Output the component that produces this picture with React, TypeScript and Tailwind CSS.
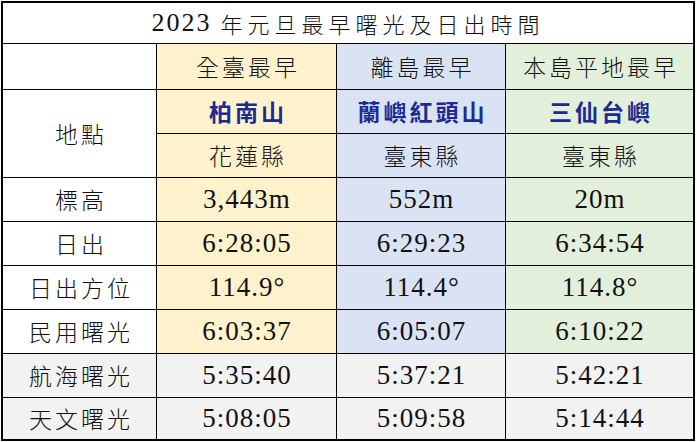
import React from 'react';

const cjk = '"Noto Sans CJK TC", "Noto Sans CJK SC", sans-serif';
const num = '"Liberation Serif", "Noto Sans CJK TC", serif';

const colBg = ['bg-[#fff2cc]', 'bg-[#dae3f3]', 'bg-[#e2efda]'];

const headers = ['全臺最早', '離島最早', '本島平地最早'];
const places = ['柏南山', '蘭嶼紅頭山', '三仙台嶼'];
const counties = ['花蓮縣', '臺東縣', '臺東縣'];

const rows: { label: string; values: string[]; gray?: boolean }[] = [
  { label: '標高', values: ['3,443m', '552m', '20m'] },
  { label: '日出', values: ['6:28:05', '6:29:23', '6:34:54'] },
  { label: '日出方位', values: ['114.9°', '114.4°', '114.8°'] },
  { label: '民用曙光', values: ['6:03:37', '6:05:07', '6:10:22'] },
  { label: '航海曙光', values: ['5:35:40', '5:37:21', '5:42:21'], gray: true },
  { label: '天文曙光', values: ['5:08:05', '5:09:58', '5:14:44'], gray: true },
];

const Cjk: React.FC<{ children: React.ReactNode; className?: string }> = ({ children, className = '' }) => (
  <span className={`text-[23px] tracking-[3px] pl-[3px] leading-none ${className}`} style={{ fontFamily: cjk }}>
    {children}
  </span>
);

const Num: React.FC<{ children: React.ReactNode }> = ({ children }) => (
  <span className="text-[27px] tracking-[1px] pl-[1px] leading-none text-[#111]" style={{ fontFamily: num }}>
    {children}
  </span>
);

const Cell: React.FC<{ className?: string; children?: React.ReactNode }> = ({ className = '', children }) => (
  <div className={`flex items-center justify-center ${className}`}>{children}</div>
);

export default function App() {
  return (
    <div className="w-[697px] h-[442px] bg-white pl-px pt-px">
      <div className="w-[694px] h-[440px] border-2 border-black bg-black grid gap-px grid-cols-[153px_179px_168px_187px] grid-rows-[40px_45px_43px_43px_43px_43px_43px_43px_43px_41px]">
        <Cell className="col-span-4 bg-white">
          <span className="text-[26px] tracking-[2px] leading-none text-[#111]" style={{ fontFamily: num }}>
            2023
          </span>
          <span className="text-[22px] tracking-[5px] pl-[9px] leading-none font-light text-[#111]" style={{ fontFamily: cjk }}>
            年元旦最早曙光及日出時間
          </span>
        </Cell>

        <Cell className="bg-white" />
        {headers.map((h, i) => (
          <Cell key={h} className={colBg[i]}>
            <Cjk className="font-light text-[#111]">{h}</Cjk>
          </Cell>
        ))}

        <Cell className="row-span-2 bg-white">
          <Cjk className="font-light text-[#111]">地點</Cjk>
        </Cell>
        {places.map((p, i) => (
          <Cell key={p} className={colBg[i]}>
            <Cjk className="font-bold text-[#1c2a94]">{p}</Cjk>
          </Cell>
        ))}
        {counties.map((c, i) => (
          <Cell key={i} className={colBg[i]}>
            <Cjk className="font-light text-[#111]">{c}</Cjk>
          </Cell>
        ))}

        {rows.map((r) => (
          <React.Fragment key={r.label}>
            <Cell className={r.gray ? 'bg-[#f2f2f2]' : 'bg-white'}>
              <Cjk className="font-light text-[#111]">{r.label}</Cjk>
            </Cell>
            {r.values.map((v, i) => (
              <Cell key={i} className={r.gray ? 'bg-[#f2f2f2]' : colBg[i]}>
                <Num>{v}</Num>
              </Cell>
            ))}
          </React.Fragment>
        ))}
      </div>
    </div>
  );
}
